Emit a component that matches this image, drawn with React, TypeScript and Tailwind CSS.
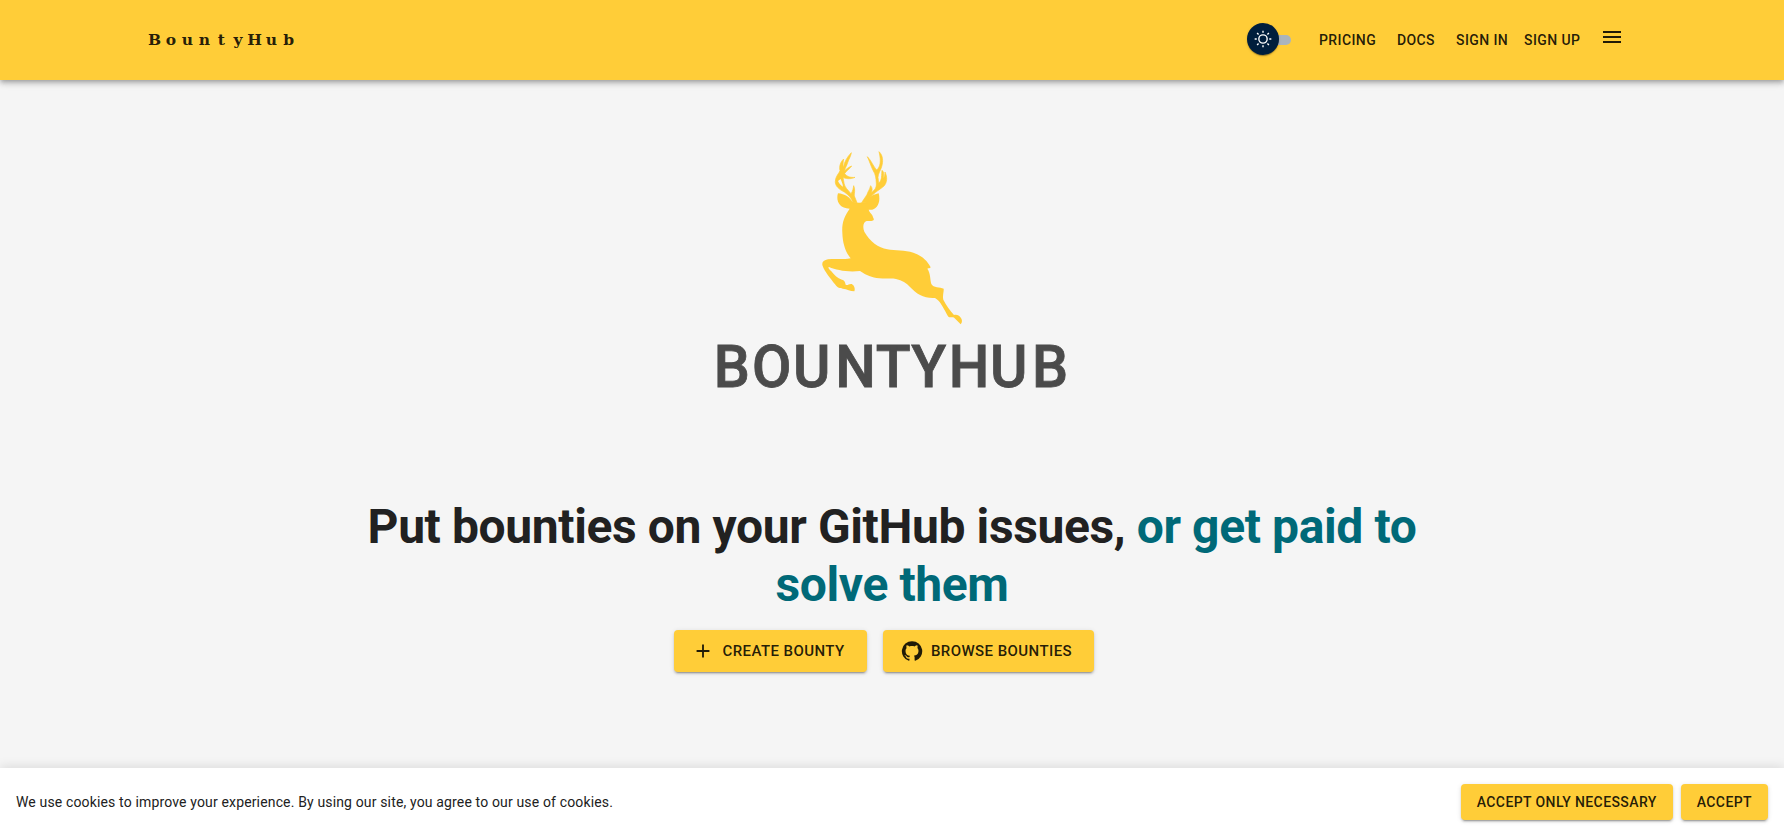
import React from 'react';

function Deer() {
  return (
    <svg viewBox="0 0 510 600" className="h-[200px] w-[170px] shrink-0" fill="#ffcd38" aria-hidden="true">
      <path d="M84 160C78 178 84 206 119 206C102 230 95 250 97 278C98 310 106 335 122 355C100 359 75 356 54 358C40 360 34 368 38 378C44 395 62 416 75 433C83 445 90 444 98 446C112 447 120 454 133 454C137 444 130 432 123 432C115 433 112 437 107 434C106 428 104 420 96 419C82 415 72 404 64 394C58 388 52 382 57 381C80 390 110 397 150 393C170 406 185 413 208 415C230 417 245 414 258 417C276 420 290 430 300 441C320 462 342 476 375 474C390 483 397 498 405 512C412 524 413 532 421 532C428 532 430 530 434 535L452 553C457 547 457 540 453 534C447 525 440 523 432 525C420 512 408 495 400 479C397 468 402 455 401 446C390 441 370 444 364 432C360 418 362 400 352 386C355 384 360 386 362 382C350 360 335 347 310 338C285 330 255 333 232 328C205 323 180 305 163 275C157 260 160 246 170 243C178 242 186 245 191 240C193 236 188 232 188 228C184 220 178 217 176 209C198 213 214 190 206 160C185 164 172 177 168 187C155 188 140 189 127 186C121 172 104 162 84 160Z" />
      <g stroke="#ffcd38" strokeWidth="2" strokeLinejoin="round">
        <path d="M129 188C124 174 117 166 103 156C85 147 75 137 76 124C76 110 87 100 90 92C87 80 91 66 101 57C99 69 98 78 100 82C103 65 112 50 124 38C123 48 116 58 113 68C110 78 105 84 104 92C112 84 118 81 125 78C119 87 108 93 104 101C112 111 123 113 135 112C123 118 106 117 99 112C102 125 101 136 110 146L123 161C128 154 130 145 131 137C137 150 132 160 133 168L141 188Z" />
        <path d="M155 188C163 174 171 167 174 156C178 149 180 144 182 137C188 145 187 151 184 158C195 150 200 142 199 130C198 112 196 102 190 93C183 80 178 62 172 50C184 61 190 80 200 90C211 81 214 63 207 35C219 45 220 64 215 80C212 91 204 101 204 112L206 130C217 120 214 104 216 91C224 97 220 108 221 115C224 109 225 102 225 96C233 112 231 128 222 138C208 151 183 161 172 188Z" />
      </g>
      <path d="M84 123C88 132 93 137 99 140C98 131 95 125 92 117ZM209 103C207 110 207 118 209 122C212 116 212 108 211 103Z" fill="#f5f5f5" />
    </svg>
  );
}

const btn =
  'inline-flex items-center justify-center rounded bg-[#ffcd38] font-medium uppercase tracking-[0.02857em] text-black/87 shadow-[0px_3px_1px_-2px_rgba(0,0,0,0.2),0px_2px_2px_0px_rgba(0,0,0,0.14),0px_1px_5px_0px_rgba(0,0,0,0.12)]';

export default function App() {
  return (
    <div className="flex h-[836px] flex-col overflow-hidden bg-[#f5f5f5] font-['Roboto',sans-serif] text-[#212121]">
      <header className="z-10 h-20 shrink-0 bg-[#ffcd38] text-black/87 shadow-[0px_2px_4px_-1px_rgba(0,0,0,0.2),0px_4px_5px_0px_rgba(0,0,0,0.14),0px_1px_10px_0px_rgba(0,0,0,0.12)]">
        <div className="mx-auto flex h-full w-[1488px] items-center">
          <svg className="-ml-1 h-8 w-[160px]" viewBox="-4 0 160 32" role="img">
            <text
              x="6.6 22.8 39.5 56.3 73.3 90 106.7 123.5 140.7"
              y="21.3"
              textAnchor="middle"
              fill="rgba(0,0,0,0.87)"
              className="font-['DejaVu_Serif',serif] text-[15.5px] font-bold"
            >
              BountyHub
            </text>
          </svg>
          <div className="mr-px ml-auto flex h-8 w-11 items-center pb-0.5">
            <span className="z-10 flex size-8 shrink-0 items-center justify-center rounded-full bg-[#001e3c] shadow-[0px_2px_1px_-1px_rgba(0,0,0,0.2),0px_1px_1px_0px_rgba(0,0,0,0.14),0px_1px_3px_0px_rgba(0,0,0,0.12)]">
              <svg className="size-5" viewBox="0 0 20 20" fill="#fff">
                <path d="M9.305 1.667V3.75h1.389V1.667h-1.39zm-4.707 1.95l-.982.982L5.09 6.072l.982-.982-1.473-1.473zm10.802 0L13.927 5.09l.982.982 1.473-1.473-.982-.982zM10 5.139a4.872 4.872 0 00-4.862 4.86A4.872 4.872 0 0010 14.862 4.872 4.872 0 0014.86 10 4.872 4.872 0 0010 5.139zm0 1.389A3.462 3.462 0 0113.471 10a3.462 3.462 0 01-3.473 3.472A3.462 3.462 0 016.527 10 3.462 3.462 0 0110 6.528zM1.665 9.305v1.39h2.083v-1.39H1.666zm14.583 0v1.39h2.084v-1.39h-2.084zM5.09 13.928L3.616 15.4l.982.982 1.473-1.473-.982-.982zm9.82 0l-.982.982 1.473 1.473.982-.982-1.473-1.473zM9.305 16.25v2.083h1.389V16.25h-1.39z" />
              </svg>
            </span>
            <span className="mt-0.5 -ml-4 h-2.5 w-7 shrink-0 rounded-full bg-[#aab4be]" />
          </div>
          <nav className="flex items-center text-sm font-medium tracking-[0.02857em]">
            <a className="ml-[27px] w-[78px]">PRICING</a>
            <a className="w-[59px]">DOCS</a>
            <a className="w-[68px]">SIGN IN</a>
            <a className="w-[76px]">SIGN UP</a>
          </nav>
          <svg className="mr-3 mb-1.5 size-6" viewBox="0 0 24 24" fill="currentColor">
            <path d="M3 18h18v-2H3v2zm0-5h18v-2H3v2zm0-7v2h18V6H3z" />
          </svg>
        </div>
      </header>

      <main className="flex flex-1 flex-col items-center">
        <div className="mt-[60px] flex w-[164px] flex-col items-start">
          <Deer />
        </div>
        <svg className="-mt-[10px] h-[76px] w-[360px] shrink-0" viewBox="0 0 360 76" role="img">
          <text
            x="1.9 41.2 83.6 127.2 168.8 205.5 244 286.5 329.9"
            y="57.2"
            transform="scale(0.97 1)"
            fill="#4b4b4b"
            stroke="#4b4b4b"
            strokeWidth="0.8"
            className="font-['Roboto',sans-serif] text-[59px] font-medium"
          >
            BOUNTYHUB
          </text>
        </svg>
        <h1 className="mt-[92px] max-w-[1140px] text-center text-[48px] leading-[1.2] font-bold tracking-[-0.39px]">
          Put bounties on your GitHub issues, <span className="text-[#006978]">or get paid to solve them</span>
        </h1>
        <div className="mt-[17px] mr-4 flex gap-4">
          <button className={`${btn} h-[42px] w-[193px] text-[15px]`}>
            <svg className="mr-2 -ml-1 size-[22px]" viewBox="0 0 24 24" fill="currentColor">
              <path d="M19 13h-6v6h-2v-6H5v-2h6V5h2v6h6v2z" />
            </svg>
            Create Bounty
          </button>
          <button className={`${btn} h-[42px] w-[211px] text-[15px]`}>
            <svg className="mr-2 -ml-1 size-[22px]" viewBox="0 0 24 24" fill="currentColor">
              <path d="M12 1.27a11 11 0 00-3.48 21.46c.55.09.73-.28.73-.55v-1.84c-3.03.64-3.67-1.46-3.67-1.46-.55-1.29-1.28-1.65-1.28-1.65-.92-.65.1-.65.1-.65 1.1 0 1.73 1.1 1.73 1.1.92 1.65 2.57 1.2 3.21.92a2 2 0 01.64-1.47c-2.47-.27-5.04-1.19-5.04-5.5 0-1.1.46-2.1 1.2-2.84a3.76 3.76 0 010-2.93s.91-.28 3.11 1.1c1.8-.49 3.7-.49 5.5 0 2.1-1.38 3.02-1.1 3.02-1.1a3.76 3.76 0 01.1 2.93c.83.74 1.2 1.74 1.2 2.94 0 4.21-2.57 5.13-5.04 5.4.45.37.82.92.82 2.02v3.03c0 .27.1.64.73.55A11 11 0 0012 1.27" />
            </svg>
            Browse Bounties
          </button>
        </div>
      </main>

      <footer className="flex h-[68px] shrink-0 items-center gap-2 bg-white px-4 shadow-[0px_-2px_10px_rgba(0,0,0,0.1)]">
        <p className="mr-auto text-sm tracking-[0.01071em]">
          We use cookies to improve your experience. By using our site, you agree to our use of cookies.
        </p>
        <button className={`${btn} h-9 px-4 text-sm`}>Accept only necessary</button>
        <button className={`${btn} h-9 px-4 text-sm`}>Accept</button>
      </footer>
    </div>
  );
}
